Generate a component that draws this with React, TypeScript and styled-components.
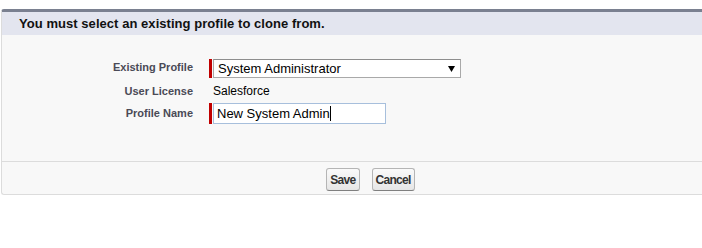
import styled, { createGlobalStyle } from "styled-components";

const GlobalStyle = createGlobalStyle`
    html, body {
        margin: 0;
        padding: 0;
        background: #ffffff;
    }
    body {
        font-family: "Liberation Sans", Arial, sans-serif;
        color: #000;
    }
`;

// the panel is wider than the window, so clip it here
const Page = styled.div`
    width: 100%;
    overflow: hidden;
`;

// outer panel, dark strip on top, light grey frame around
const Panel = styled.div`
    width: 737px;
    margin: 9px 0 0 1px;
    border-top: 3px solid #7a8090;
    border-left: 1px solid #dcdcdc;
    border-bottom: 1px solid #dcdcdc;
    border-radius: 3px 0 0 3px;
    background: #f8f8f8;
`;

const Header = styled.div`
    height: 23px;
    background: #e3e5ef;
    display: flex;
    align-items: center;
    padding-left: 17px;
`;

const Title = styled.h2`
    margin: 0;
    font-size: 13px;
    font-weight: bold;
    letter-spacing: 0.05px;
    color: #111;
`;

const Body = styled.div`
    height: 102px;
    padding-top: 24px;
`;

// two column form, labels right aligned against the fields
const FormGrid = styled.div`
    display: grid;
    grid-template-columns: 191px 260px;
    column-gap: 16px;
    row-gap: 3px;
`;

const Label = styled.label<{ $offset: number; $height: number }>`
    font-size: 11px;
    font-weight: bold;
    color: #4a4a56;
    text-align: right;
    height: ${p => p.$height}px;
    padding-top: ${p => p.$offset}px;
    box-sizing: border-box;
`;

const Field = styled.div<{ $height: number }>`
    display: flex;
    align-items: center;
    height: ${p => p.$height}px;
`;

const Required = styled.span`
    width: 3px;
    align-self: stretch;
    background: #c00000;
    margin-right: 1px;
`;

const SelectWrap = styled.div`
    position: relative;
    width: 248px;
    height: 19px;
`;

const Select = styled.select`
    appearance: none;
    width: 100%;
    height: 100%;
    margin: 0;
    padding: 0 20px 0 4px;
    border: 1px solid #a9a9a9;
    border-top-color: #8e8e8e;
    background: #fff;
    font-family: "Liberation Sans", Arial, sans-serif;
    font-size: 13px;
    color: #000;
    border-radius: 0;
    outline: none;
`;

// small black triangle drawn over the select's right end
const Arrow = styled.svg`
    position: absolute;
    right: 6px;
    top: 7px;
    pointer-events: none;
`;

// read-only value, lined up with the inputs after the required bar
const ReadOnly = styled.span`
    margin-left: 4px;
    font-size: 12px;
    color: #000;
`;

const TextBox = styled.div`
    width: 173px;
    height: 21px;
    box-sizing: border-box;
    border: 1px solid #a7bfdc;
    background: #fff;
    display: flex;
    align-items: center;
    padding-left: 3px;
    font-size: 13px;
    color: #000;
    white-space: nowrap;
`;

const Caret = styled.span`
    width: 1px;
    height: 15px;
    background: #000;
`;

const Footer = styled.div`
    height: 33px;
    border-top: 1px solid #dcdcdc;
    display: flex;
    justify-content: center;
    align-items: flex-start;
    gap: 12px;
    padding-top: 6px;
    box-sizing: border-box;
`;

const Button = styled.button`
    height: 23px;
    padding: 0 3px;
    border: 1px solid #b5b5b5;
    border-bottom-color: #7f7f7f;
    border-radius: 3px;
    background: linear-gradient(#fafafa, #e6e6e6);
    font-family: "Liberation Sans", Arial, sans-serif;
    font-size: 12px;
    font-weight: bold;
    letter-spacing: -0.7px;
    color: #333;
`;

export default function App() {
    return (
        <Page>
            <GlobalStyle />
            <Panel>
                <Header>
                    <Title>You must select an existing profile to clone from.</Title>
                </Header>
                <Body>
                    <FormGrid>
                        <Label $offset={2} $height={19}>Existing Profile</Label>
                        <Field $height={19}>
                            <Required />
                            <SelectWrap>
                                <Select defaultValue="sysadmin">
                                    <option value="sysadmin">System Administrator</option>
                                </Select>
                                <Arrow width="7" height="6" viewBox="0 0 7 6">
                                    <path d="M0 0 H7 L3.5 6 Z" fill="#000" />
                                </Arrow>
                            </SelectWrap>
                        </Field>

                        <Label $offset={4} $height={19}>User License</Label>
                        <Field $height={19}>
                            <ReadOnly>Salesforce</ReadOnly>
                        </Field>

                        <Label $offset={4} $height={21}>Profile Name</Label>
                        <Field $height={21}>
                            <Required />
                            <TextBox>
                                New System Admin<Caret />
                            </TextBox>
                        </Field>
                    </FormGrid>
                </Body>
                <Footer>
                    <Button>Save</Button>
                    <Button>Cancel</Button>
                </Footer>
            </Panel>
        </Page>
    );
}
